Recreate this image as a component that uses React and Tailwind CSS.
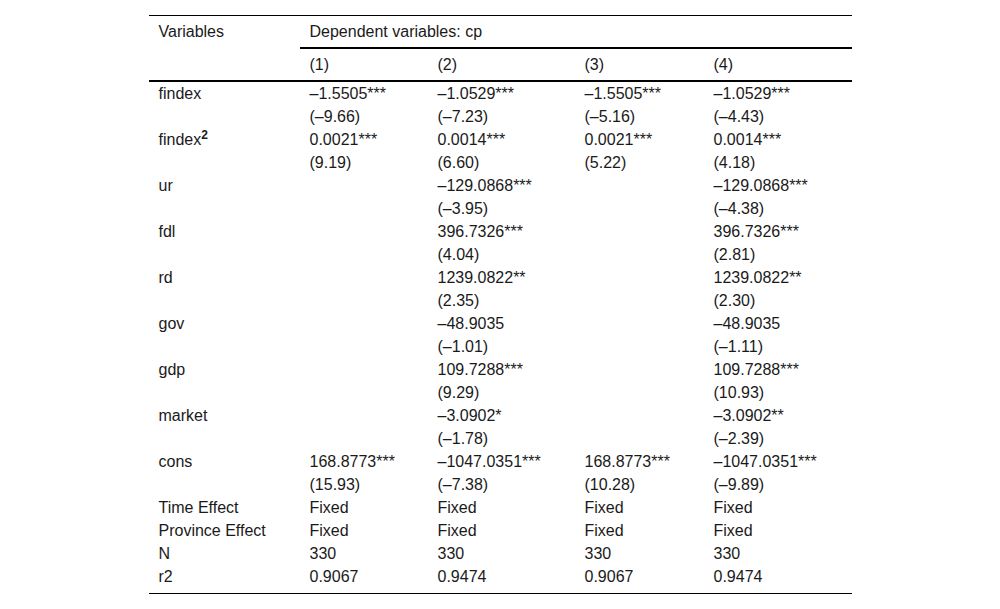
import React from "react";

const COLS = "grid grid-cols-[151px_128px_147px_129px_148px]";

const rows = [
  ["findex", "–1.5505***", "–1.0529***", "–1.5505***", "–1.0529***"],
  ["", "(–9.66)", "(–7.23)", "(–5.16)", "(–4.43)"],
  ["findex2", "0.0021***", "0.0014***", "0.0021***", "0.0014***"],
  ["", "(9.19)", "(6.60)", "(5.22)", "(4.18)"],
  ["ur", "", "–129.0868***", "", "–129.0868***"],
  ["", "", "(–3.95)", "", "(–4.38)"],
  ["fdl", "", "396.7326***", "", "396.7326***"],
  ["", "", "(4.04)", "", "(2.81)"],
  ["rd", "", "1239.0822**", "", "1239.0822**"],
  ["", "", "(2.35)", "", "(2.30)"],
  ["gov", "", "–48.9035", "", "–48.9035"],
  ["", "", "(–1.01)", "", "(–1.11)"],
  ["gdp", "", "109.7288***", "", "109.7288***"],
  ["", "", "(9.29)", "", "(10.93)"],
  ["market", "", "–3.0902*", "", "–3.0902**"],
  ["", "", "(–1.78)", "", "(–2.39)"],
  ["cons", "168.8773***", "–1047.0351***", "168.8773***", "–1047.0351***"],
  ["", "(15.93)", "(–7.38)", "(10.28)", "(–9.89)"],
  ["Time Effect", "Fixed", "Fixed", "Fixed", "Fixed"],
  ["Province Effect", "Fixed", "Fixed", "Fixed", "Fixed"],
  ["N", "330", "330", "330", "330"],
  ["r2", "0.9067", "0.9474", "0.9067", "0.9474"],
];

const Label = ({ text }) =>
  text === "findex2" ? (
    <span>
      findex<sup className="font-bold">2</sup>
    </span>
  ) : (
    text
  );

export default function App() {
  return (
    <div className="min-h-screen bg-white pt-[15px] font-['Liberation_Sans',Arial,sans-serif] text-[16px] text-[#1a1a1a]">
      <div className="w-[703px] mx-auto border-t border-b border-black pb-[5px]">
        {/* header */}
        <div className={COLS}>
          <div className="h-[32px] pl-[10px] flex items-center">Variables</div>
          <div className="col-span-4 h-[33px] pl-[10px] flex items-center border-b-2 border-black">
            Dependent variables: cp
          </div>
        </div>
        <div className={`${COLS} border-b-2 border-black`}>
          <div className="h-[31px]" />
          {["(1)", "(2)", "(3)", "(4)"].map((c) => (
            <div key={c} className="h-[31px] pl-[10px] flex items-center">
              {c}
            </div>
          ))}
        </div>

        {/* body */}
        {rows.map((r, i) => (
          <div key={i} className={COLS}>
            {r.map((cell, j) => (
              <div key={j} className="h-[23px] pl-[10px] flex items-center whitespace-nowrap">
                {j === 0 ? <Label text={cell} /> : cell}
              </div>
            ))}
          </div>
        ))}
      </div>
    </div>
  );
}
